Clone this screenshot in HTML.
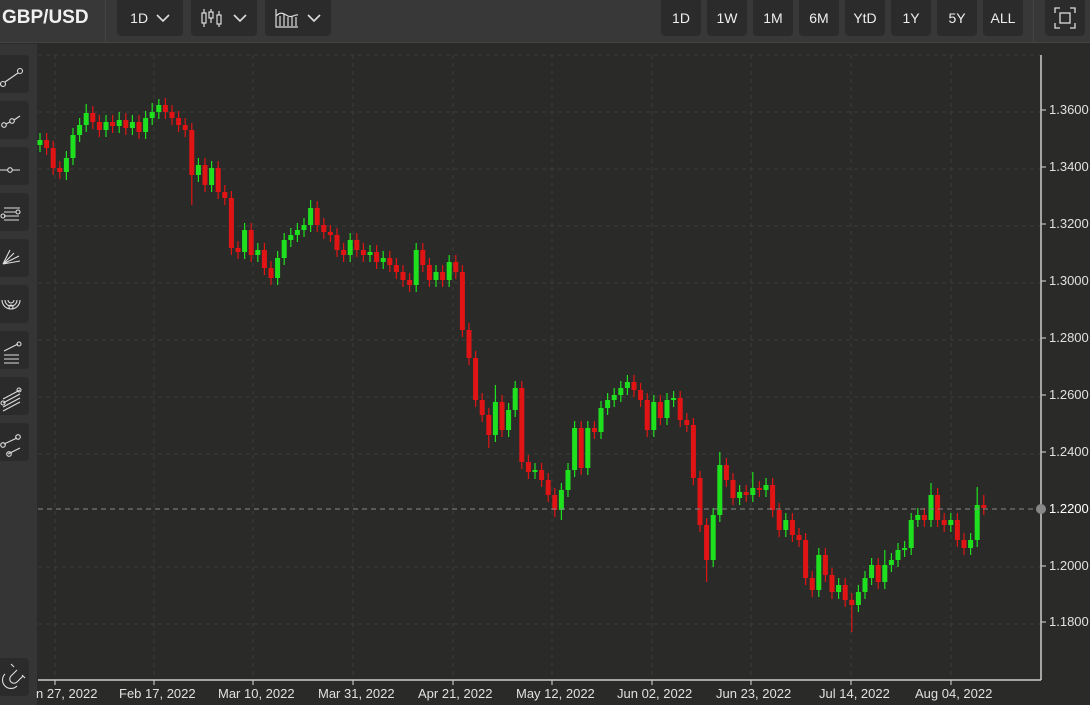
<!DOCTYPE html>
<html><head><meta charset="utf-8"><style>
*{margin:0;padding:0;box-sizing:border-box}
body{width:1090px;height:705px;background:#2a2b29;font-family:"Liberation Sans",sans-serif;overflow:hidden;position:relative;color:#e8e8e8}
.top{position:absolute;left:0;top:0;width:1090px;height:43px;background:#383838;border-bottom:1px solid #444}
.btn{position:absolute;top:0;height:36px;background:#2b2b2b;border-radius:0 0 4px 4px;font-size:14px;display:flex;align-items:center;justify-content:center;color:#eee}
.side{position:absolute;left:0;top:44px;width:37px;height:661px;background:#353535}
.sb{position:absolute;left:0;width:29px;height:38px;background:#2b2b2b;border-radius:0 4px 4px 0}
.lbl{position:absolute;font-size:13px;color:#e0e0e0}
</style></head><body>
<div class="top">
<div style="position:absolute;left:2px;top:7px;font-size:19px;font-weight:bold;color:#f0f0f0">GBP/USD</div>
<div style="position:absolute;left:105px;top:0;width:1px;height:43px;background:#444"></div>
<div class="btn" style="left:117px;width:66px">1D&nbsp;&nbsp;<svg width="14" height="9"><path d="M1 1l6 6 6-6" stroke="#ddd" stroke-width="1.6" fill="none"/></svg></div>
<div class="btn" style="left:191px;width:66px"><svg width="24" height="20"><g stroke="#ddd" fill="none" stroke-width="1.2"><path d="M3 1v18M10 1v14M18 3v16"/><rect x="1" y="5" width="4" height="10" fill="#2b2b2b"/><rect x="8" y="4" width="4" height="6" fill="#2b2b2b"/><rect x="16" y="7" width="4" height="9" fill="#2b2b2b"/></g></svg>&nbsp;&nbsp;<svg width="14" height="9"><path d="M1 1l6 6 6-6" stroke="#ddd" stroke-width="1.6" fill="none"/></svg></div>
<div class="btn" style="left:265px;width:66px"><svg width="24" height="20"><g stroke="#ddd" fill="none" stroke-width="1.2"><path d="M1 1v18h22M5 8v10M9 6v12M13 9v9M17 8v10M21 9v9M1 8c5-5 8-2 12 0s7-2 10-1"/></g></svg>&nbsp;&nbsp;<svg width="14" height="9"><path d="M1 1l6 6 6-6" stroke="#ddd" stroke-width="1.6" fill="none"/></svg></div>
<div class="btn" style="left:661px;width:40px">1D</div>
<div class="btn" style="left:707px;width:40px">1W</div>
<div class="btn" style="left:753px;width:40px">1M</div>
<div class="btn" style="left:799px;width:40px">6M</div>
<div class="btn" style="left:845px;width:40px">YtD</div>
<div class="btn" style="left:891px;width:40px">1Y</div>
<div class="btn" style="left:937px;width:40px">5Y</div>
<div class="btn" style="left:983px;width:40px">ALL</div>
<div style="position:absolute;left:1033px;top:0;width:1px;height:43px;background:#444"></div>
<div class="btn" style="left:1045px;width:40px"><svg width="22" height="22"><g stroke="#ddd" fill="none" stroke-width="1.3"><path d="M1 6V1h5M16 1h5v5M21 16v5h-5M6 21H1v-5"/><rect x="6" y="6" width="10" height="10"/></g></svg></div>
</div>
<div class="side">
<div class="sb" style="top:11px"></div><div class="sb" style="top:57px"></div><div class="sb" style="top:103px"></div><div class="sb" style="top:149px"></div><div class="sb" style="top:195px"></div><div class="sb" style="top:241px"></div><div class="sb" style="top:287px"></div><div class="sb" style="top:333px"></div><div class="sb" style="top:379px"></div><div class="sb" style="top:614px"></div>
<svg width="30" height="661" style="position:absolute;left:0;top:0"><g stroke="#ddd" fill="none" stroke-width="1.1">
<circle cx="3" cy="40" r="2.5"/><circle cx="20" cy="27" r="2.5"/><path d="M5 38l13-9"/>
<circle cx="4" cy="81" r="2.3"/><circle cx="12" cy="77" r="2.3"/><path d="M6 80l4-2M14 76l6-4"/>
<path d="M0 126h8M12 126h8"/><circle cx="10" cy="126" r="2.3"/>
<path d="M4 164h16M4 168h12M4 172h15M4 176h15"/><circle cx="3" cy="172" r="2"/><circle cx="18" cy="168" r="2"/>
<path d="M3 220l7-14M3 220l11-11M3 220l16-8M3 220l17-3"/>
<path d="M2 256a9 9 0 0 0 18 0M5 256a6 6 0 0 0 12 0M8 256a3 3 0 0 0 6 0"/><circle cx="11" cy="263" r="2"/>
<path d="M4 307l14-7M4 311h15M4 315h15M4 319h15"/><circle cx="19" cy="300" r="2"/>
<path d="M3 355l17-9M3 359l17-9M3 363l17-9M3 367l17-9"/><circle cx="19" cy="346" r="2"/><circle cx="3" cy="359" r="2"/>
<path d="M4 400l13-6M8 410l12-6"/><circle cx="3" cy="401" r="2.3"/><circle cx="18" cy="393" r="2.3"/><circle cx="9" cy="410" r="2.3"/>
<path d="M17 626l-6 6a4 4 0 0 0 6 6l6-6M14 623l-3-3M22 631l3 3"/><path d="M5 630a8 8 0 0 0 12 12"/>
</g></svg>
</div>
<svg width="1090" height="705" style="position:absolute;left:0;top:0">
<g stroke="#3c3d3b" stroke-dasharray="4,4">
<path d="M55 55V680M154 55V680M253 55V680M353 55V680M453 55V680M552 55V680M652 55V680M751 55V680M851 55V680M951 55V680"/>
<path d="M38 55H1040M38 112H1040M38 169H1040M38 226H1040M38 283H1040M38 340H1040M38 397H1040M38 454H1040M38 567H1040M38 624H1040"/>
</g>
<g stroke="#ddd"><path d="M55 680v5M154 680v5M253 680v5M353 680v5M453 680v5M552 680v5M652 680v5M751 680v5M851 680v5M951 680v5M1041 110h5M1041 167h5M1041 224h5M1041 281h5M1041 338h5M1041 395h5M1041 452h5M1041 566h5M1041 622h5"/></g>
<!-- green -->
<path stroke="#1ee01e" stroke-width="1.2" fill="none" d="M40 133V152M66.4 151V180M73 128V165M79.6 118V142M86.2 104V132M106 115V137M119.2 112V133M132.4 115V135M145.6 111V139M152.2 103V125M158.8 99V119M198.4 158V182M211.6 161V192M244.6 223V259M257.8 243V262M277.6 251V285M284.2 233V265M290.8 228V247M297.4 223V242M304 218V237M310.6 200V232M350.2 233V262M370 245V262M383.2 251V269M416.2 243V292M436 265V287M449.2 255V287M495.4 385V442M508.6 403V437M515.2 381V417M535 463V479M561.4 483V520M568 463V497M574.6 421V477M587.8 421V475M601 401V439M607.6 393V415M614.2 388V407M620.8 381V402M627.4 375V395M653.8 395V437M667 393V425M673.6 391V407M713.2 508V567M719.8 452V522M739.6 485V505M752.8 472V502M766 478V497M785.8 513V537M818.8 548V597M838.6 578V599M858.4 585V612M865 571V599M871.6 558V585M884.8 550V589M891.4 553V572M898 543V567M904.6 541V557M911.2 513V555M917.8 508V527M931 483V527M950.8 513V532M970.6 533V555M977.2 487V547"/>
<path stroke="#1ee01e" stroke-width="5" fill="none" d="M40 140V145M66.4 158V172M73 135V158M79.6 125V135M86.2 113V125M106 122V130M119.2 120V126M132.4 122V128M145.6 118V132M152.2 112V118M158.8 105V112M198.4 165V175M211.6 168V185M244.6 230V252M257.8 250V255M277.6 258V278M284.2 240V258M290.8 235V240M297.4 230V235M304 225V230M310.6 208V225M350.2 240V255M370 252V255M383.2 258V262M416.2 250V285M436 272V280M449.2 262V280M495.4 402V435M508.6 410V430M515.2 388V410M535 470V472M561.4 490V510M568 470V490M574.6 428V470M587.8 428V468M601 408V432M607.6 400V408M614.2 395V400M620.8 388V395M627.4 382V388M653.8 402V430M667 400V418M673.6 398V400M713.2 515V560M719.8 465V515M739.6 492V498M752.8 488V495M766 485V490M785.8 520V530M818.8 555V590M838.6 585V592M858.4 592V605M865 578V592M871.6 565V578M884.8 565V582M891.4 560V565M898 550V560M904.6 548V550M911.2 520V548M917.8 515V520M931 495V520M950.8 520V525M970.6 540V548M977.2 505V540"/>
<!-- red -->
<path stroke="#e01414" stroke-width="1.2" fill="none" d="M46.6 133V155M53.2 141V175M59.8 161V179M92.8 106V129M99.4 115V137M112.6 115V133M125.8 113V135M139 115V139M165.4 98V119M172 105V125M178.6 111V132M185.2 118V137M191.8 123V205M205 158V192M218.2 161V199M224.8 185V205M231.4 191V255M238 241V259M251.2 223V262M264.4 243V275M271 261V285M317.2 201V232M323.8 218V239M330.4 225V242M337 228V257M343.6 243V262M356.8 233V257M363.4 243V262M376.6 245V269M389.8 251V272M396.4 258V279M403 265V287M409.6 273V292M422.8 243V272M429.4 258V287M442.6 265V287M455.8 255V279M462.4 265V337M469 323V365M475.6 351V407M482.2 393V422M488.8 408V448M502 395V437M521.8 381V469M528.4 455V479M541.6 463V487M548.2 473V502M554.8 488V517M581.2 421V475M594.4 421V439M634 375V397M640.6 383V407M647.2 393V437M660.4 395V425M680.2 391V427M686.8 413V432M693.4 418V485M700 471V532M706.6 518V582M726.4 458V487M733 473V505M746.2 485V502M759.4 481V497M772.6 478V517M779.2 503V537M792.4 513V542M799 528V547M805.6 533V585M812.2 571V597M825.4 548V582M832 568V599M845.2 578V607M851.8 593V632M878.2 558V589M924.4 508V527M937.6 488V527M944.2 513V532M957.4 513V547M964 533V555M983.8 495V515"/>
<path stroke="#e01414" stroke-width="5" fill="none" d="M46.6 140V148M53.2 148V168M59.8 168V172M92.8 113V122M99.4 122V130M112.6 122V126M125.8 120V128M139 122V132M165.4 105V112M172 112V118M178.6 118V125M185.2 125V130M191.8 130V175M205 165V185M218.2 168V192M224.8 192V198M231.4 198V248M238 248V252M251.2 230V255M264.4 250V268M271 268V278M317.2 208V225M323.8 225V232M330.4 232V235M337 235V250M343.6 250V255M356.8 240V250M363.4 250V255M376.6 252V262M389.8 258V265M396.4 265V272M403 272V280M409.6 280V285M422.8 250V265M429.4 265V280M442.6 272V280M455.8 262V272M462.4 272V330M469 330V358M475.6 358V400M482.2 400V415M488.8 415V435M502 402V430M521.8 388V462M528.4 462V472M541.6 470V480M548.2 480V495M554.8 495V510M581.2 428V468M594.4 428V432M634 382V390M640.6 390V400M647.2 400V430M660.4 402V418M680.2 398V420M686.8 420V425M693.4 425V478M700 478V525M706.6 525V560M726.4 465V480M733 480V498M746.2 492V495M759.4 488V490M772.6 485V510M779.2 510V530M792.4 520V535M799 535V540M805.6 540V578M812.2 578V590M825.4 555V575M832 575V592M845.2 585V600M851.8 600V605M878.2 565V582M924.4 515V520M937.6 495V520M944.2 520V525M957.4 520V540M964 540V548M983.8 505V508"/>
<line x1="38" y1="509" x2="1041" y2="509" stroke="#888" stroke-dasharray="5,4"/>
<line x1="1041" y1="55" x2="1041" y2="680" stroke="#ccc" stroke-width="1.5"/>
<line x1="38" y1="680" x2="1041" y2="680" stroke="#ccc" stroke-width="1.5"/>
<circle cx="1041" cy="509" r="5" fill="#888"/>
</svg>
<div class="lbl" style="left:1049px;top:102px">1.3600</div>
<div class="lbl" style="left:1049px;top:159px">1.3400</div>
<div class="lbl" style="left:1049px;top:216px">1.3200</div>
<div class="lbl" style="left:1049px;top:273px">1.3000</div>
<div class="lbl" style="left:1049px;top:330px">1.2800</div>
<div class="lbl" style="left:1049px;top:387px">1.2600</div>
<div class="lbl" style="left:1049px;top:444px">1.2400</div>
<div class="lbl" style="left:1049px;top:501px;color:#fff">1.2200</div>
<div class="lbl" style="left:1049px;top:558px">1.2000</div>
<div class="lbl" style="left:1049px;top:614px">1.1800</div>
<div class="lbl" style="left:36px;top:686px">n 27, 2022</div>
<div class="lbl" style="left:119px;top:686px">Feb 17, 2022</div>
<div class="lbl" style="left:218px;top:686px">Mar 10, 2022</div>
<div class="lbl" style="left:318px;top:686px">Mar 31, 2022</div>
<div class="lbl" style="left:418px;top:686px">Apr 21, 2022</div>
<div class="lbl" style="left:516px;top:686px">May 12, 2022</div>
<div class="lbl" style="left:617px;top:686px">Jun 02, 2022</div>
<div class="lbl" style="left:716px;top:686px">Jun 23, 2022</div>
<div class="lbl" style="left:819px;top:686px">Jul 14, 2022</div>
<div class="lbl" style="left:915px;top:686px">Aug 04, 2022</div>
</body></html>
